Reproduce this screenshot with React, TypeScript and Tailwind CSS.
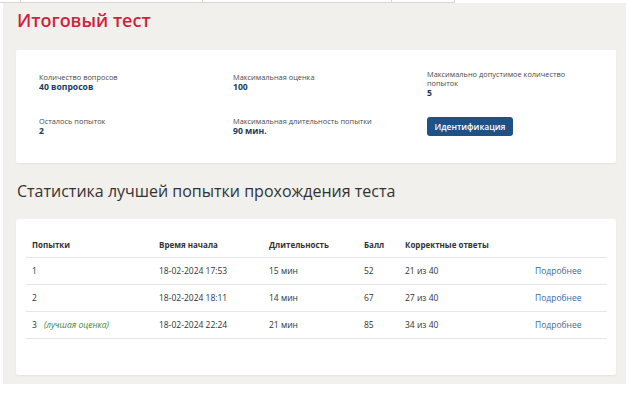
import React from "react";

const rows = [
  { n: "1", best: false, t: "18-02-2024 17:53", d: "15 мин", s: "52", c: "21 из 40" },
  { n: "2", best: false, t: "18-02-2024 18:11", d: "14 мин", s: "67", c: "27 из 40" },
  { n: "3", best: true, t: "18-02-2024 22:24", d: "21 мин", s: "85", c: "34 из 40" },
];

function Info({ label, value }: { label: string; value: string }) {
  return (
    <div className="flex flex-col">
      <div className="text-[7.4px] leading-[10px] text-[#4a4a4a]">{label}</div>
      <div className="text-[8.6px] leading-[10px] font-bold text-[#1d3a5c]">{value}</div>
    </div>
  );
}

export default function App() {
  return (
    <div
      className="w-[635px] h-[394px] bg-white overflow-hidden"
      style={{ fontFamily: '"Open Sans", "Noto Sans", sans-serif' }}
    >
      <div className="flex h-[3px] w-[455px] border-b border-[#d9d6d3]">
        <div className="w-[21px] border-r border-[#d9d6d3]" />
        <div className="w-[182px] border-r border-[#d9d6d3]" />
        <div className="w-[189px] border-r border-[#d9d6d3]" />
        <div className="w-[63px] border-r border-[#d9d6d3]" />
      </div>
      <div className="ml-[3px] w-[623px] h-[381px] bg-[#f1f0ec] pl-[13px] pr-[10px]">
        <h1 className="pt-[4px] pl-[1px] text-[18px] leading-[26px] font-semibold text-[#d21f3c]">
          Итоговый тест
        </h1>
        <div className="mt-[17px] h-[113px] bg-white rounded-[2px] shadow-[0_1px_2px_rgba(0,0,0,0.06)] pl-[23px] pt-[22px]">
          <div className="grid grid-cols-[194px_194px_170px] gap-y-[18px]">
            <Info label="Количество вопросов" value="40 вопросов" />
            <Info label="Максимальная оценка" value="100" />
            <div className="flex flex-col -mt-[2px]">
              <div className="text-[7.4px] leading-[9px] text-[#4a4a4a]">
                Максимально допустимое количество попыток
              </div>
              <div className="text-[8.6px] leading-[10px] font-bold text-[#1d3a5c]">5</div>
            </div>
            <Info label="Осталось попыток" value="2" />
            <Info label="Максимальная длительность попытки" value="90 мин." />
            <div className="-mt-[4px]">
              <button className="h-[19px] w-[86px] rounded-[3px] bg-[#1e5186] text-white text-[8.5px] font-semibold leading-[19px]">
                Идентификация
              </button>
            </div>
          </div>
        </div>
        <h2 className="mt-[17px] pl-[1px] text-[16px] leading-[22px] text-[#333333]">
          Статистика лучшей попытки прохождения теста
        </h2>
        <div className="mt-[17px] h-[156px] bg-white rounded-[2px] shadow-[0_1px_2px_rgba(0,0,0,0.06)] pl-[10px] pr-[9px] pt-[13px]">
          <div className="text-[8.5px] text-[#333333]">
            <div className="flex h-[26px] items-center border-b border-[#e6e6e6] pl-[6px] font-bold text-[8px]">
              <div className="w-[127px]">Попытки</div>
              <div className="w-[110px]">Время начала</div>
              <div className="w-[95px]">Длительность</div>
              <div className="w-[41px]">Балл</div>
              <div className="w-[130px]">Корректные ответы</div>
            </div>
            {rows.map((r) => (
              <div key={r.n} className="flex h-[27px] items-center border-b border-[#e6e6e6] pl-[6px]">
                <div className="w-[127px] flex items-center">
                  <span>{r.n}</span>
                  {r.best && (
                    <span className="ml-[7px] italic text-[#3a8a3a] text-[8.5px]">(лучшая оценка)</span>
                  )}
                </div>
                <div className="w-[110px]">{r.t}</div>
                <div className="w-[95px]">{r.d}</div>
                <div className="w-[41px]">{r.s}</div>
                <div className="w-[130px]">{r.c}</div>
                <div className="text-[#3a6a9a]">Подробнее</div>
              </div>
            ))}
          </div>
        </div>
      </div>
    </div>
  );
}
